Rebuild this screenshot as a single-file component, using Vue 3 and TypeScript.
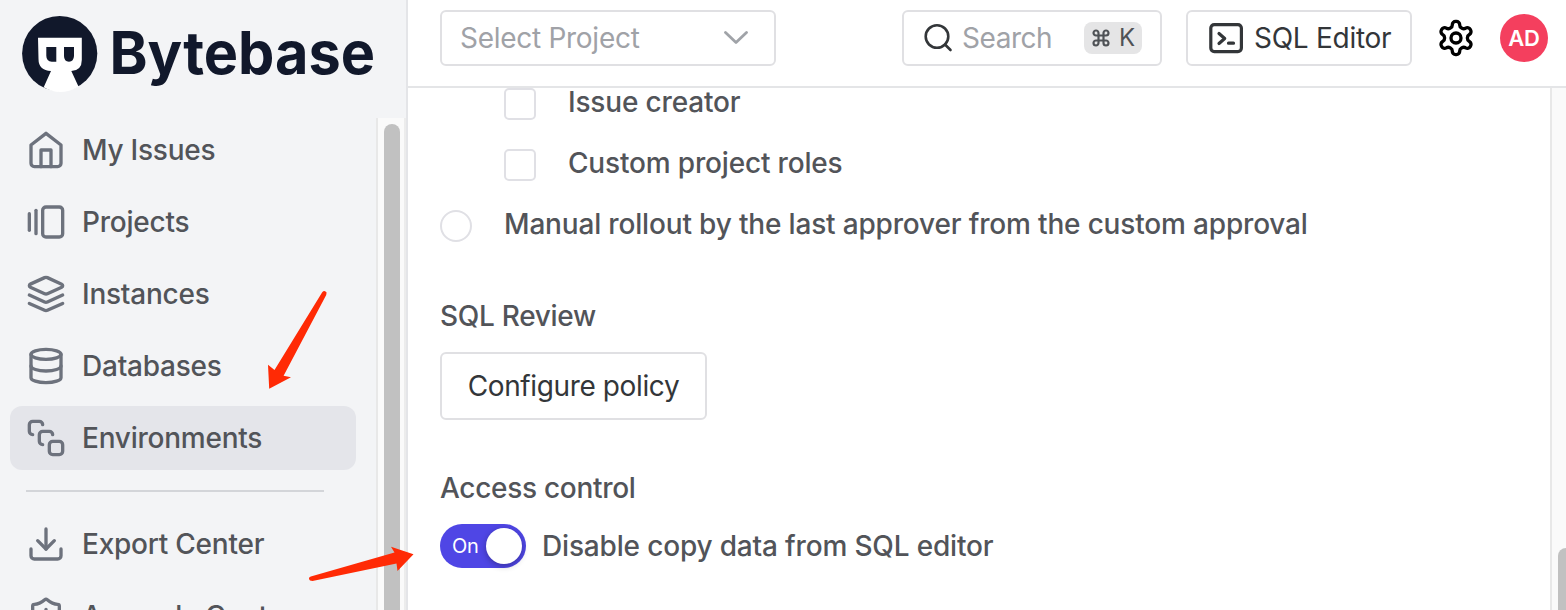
<script setup lang="ts">
interface NavItem {
  label: string
  paths: string[]
  active?: boolean
}

const primaryItems: NavItem[] = [
  { label: 'My Issues', paths: ['m3 9 9-7 9 7v11a2 2 0 0 1-2 2H5a2 2 0 0 1-2-2z', 'M9 22V12h6v10'] },
  { label: 'Projects', paths: ['M2 7v10', 'M6 5v14', 'M12 3h8a2 2 0 0 1 2 2v14a2 2 0 0 1-2 2h-8a2 2 0 0 1-2-2V5a2 2 0 0 1 2-2z'] },
  {
    label: 'Instances',
    paths: [
      'm12.83 2.18a2 2 0 0 0-1.66 0L2.6 6.08a1 1 0 0 0 0 1.83l8.58 3.91a2 2 0 0 0 1.66 0l8.58-3.9a1 1 0 0 0 0-1.83Z',
      'm22 17.65-9.17 4.16a2 2 0 0 1-1.66 0L2 17.65',
      'm22 12.65-9.17 4.16a2 2 0 0 1-1.66 0L2 12.65',
    ],
  },
  {
    label: 'Databases',
    paths: ['M3 5a9 3 0 1 0 18 0a9 3 0 1 0-18 0', 'M3 5v14a9 3 0 0 0 18 0V5', 'M3 12a9 3 0 0 0 18 0'],
  },
  {
    label: 'Environments',
    active: true,
    paths: [
      'M4 10c-1.1 0-2-.9-2-2V4c0-1.1.9-2 2-2h4c1.1 0 2 .9 2 2',
      'M10 16c-1.1 0-2-.9-2-2v-4c0-1.1.9-2 2-2h4c1.1 0 2 .9 2 2',
      'M16 14h4a2 2 0 0 1 2 2v4a2 2 0 0 1-2 2h-4a2 2 0 0 1-2-2v-4a2 2 0 0 1 2-2z',
    ],
  },
]

const secondaryItems: NavItem[] = [
  { label: 'Export Center', paths: ['M21 15v4a2 2 0 0 1-2 2H5a2 2 0 0 1-2-2v-4', 'm7 10 5 5 5-5', 'M12 15V3'] },
  {
    label: 'Anomaly Center',
    paths: [
      'M20 13c0 5-3.5 7.5-7.66 8.95a1 1 0 0 1-.67-.01C7.5 20.5 4 18 4 13V6a1 1 0 0 1 1-1c2 0 4.5-1.2 6.24-2.72a1.17 1.17 0 0 1 1.52 0C14.51 3.81 17 5 19 5a1 1 0 0 1 1 1z',
      'M12 8v4',
      'M12 16h.01',
    ],
  },
]

const roles: string[] = ['Issue creator', 'Custom project roles']
</script>

<template>
  <div class="app">
    <aside class="sidebar">
      <div class="logo">
        <svg width="400" height="118" viewBox="0 0 400 118">
          <circle cx="59.7" cy="53.6" r="37.6" fill="#11182b" />
          <path d="M38 37.8h43.8V60q0 10.5-10.5 11L78.6 86.7Q60 97 43.7 87.3L51 71Q38.5 70.5 38.5 59z" fill="#fff" />
          <path d="M46.3 47h10v14.8h-4.5q-5.5-.5-5.500-6zM64 47h10v9q-.3 5.500-5 5.800Q64 61.500 64 56z" fill="#11182b" />
          <text class="wordmark" x="109.5" y="73.500" textLength="265.500" lengthAdjust="spacingAndGlyphs">Bytebase</text>
        </svg>
      </div>
      <div class="side-body">
        <nav class="nav">
          <a v-for="item in primaryItems" :key="item.label" class="nav-item" :class="{ active: item.active }">
            <svg class="icon" viewBox="0 0 24 24"><path v-for="d in item.paths" :key="d" :d="d" /></svg>
            <span>{{ item.label }}</span>
          </a>
          <div class="divider"></div>
          <a v-for="item in secondaryItems" :key="item.label" class="nav-item">
            <svg class="icon" viewBox="0 0 24 24"><path v-for="d in item.paths" :key="d" :d="d" /></svg>
            <span>{{ item.label }}</span>
          </a>
        </nav>
        <div class="side-track"><div class="side-thumb"></div></div>
      </div>
    </aside>

    <main class="main">
      <header class="header">
        <div class="box select">
          <span>Select Project</span>
          <svg width="24" height="14" viewBox="0 0 24 14"><path d="M1.5 1.5 12 11.5 22.5 1.5" fill="none" stroke="#a0a3a8" stroke-width="2.8" stroke-linecap="round" stroke-linejoin="round" /></svg>
        </div>
        <div class="box search">
          <svg width="30" height="30" viewBox="0 0 30 30"><g fill="none" stroke="#333639" stroke-width="2.6" stroke-linecap="round"><circle cx="13" cy="13.5" r="11.3" /><path d="m21 21.5 5.500 5.500" /></g></svg>
          <span class="placeholder">Search</span>
          <span class="kbd">
            <svg width="20" height="20" viewBox="0 0 24 24"><path d="M15 6v12a3 3 0 1 0 3-3H6a3 3 0 1 0 3 3V6a3 3 0 1 0-3 3h12a3 3 0 1 0-3-3" fill="none" stroke="#4f5256" stroke-width="2.600" /></svg>
            <span>K</span>
          </span>
        </div>
        <div class="box sql">
          <svg width="36" height="32" viewBox="0 0 36 32"><g fill="none" stroke="#333639" stroke-width="3.2" stroke-linecap="round" stroke-linejoin="round"><rect x="2.8" y="2.6" width="30.6" height="27" rx="3.5" /><path d="m11 11.500 5.700 5-5.700 5M20.500 21.200h5" /></g></svg>
          <span>SQL Editor</span>
        </div>
        <svg class="gear" viewBox="0 0 24 24">
          <path d="M12.22 2h-.44a2 2 0 0 0-2 2v.18a2 2 0 0 1-1 1.73l-.43.25a2 2 0 0 1-2 0l-.15-.08a2 2 0 0 0-2.73.73l-.22.38a2 2 0 0 0 .73 2.73l.15.1a2 2 0 0 1 1 1.72v.51a2 2 0 0 1-1 1.74l-.15.09a2 2 0 0 0-.73 2.73l.22.38a2 2 0 0 0 2.73.73l.15-.08a2 2 0 0 1 2 0l.43.25a2 2 0 0 1 1 1.73V20a2 2 0 0 0 2 2h.44a2 2 0 0 0 2-2v-.18a2 2 0 0 1 1-1.73l.43-.25a2 2 0 0 1 2 0l.15.08a2 2 0 0 0 2.73-.73l.22-.39a2 2 0 0 0-.73-2.73l-.15-.08a2 2 0 0 1-1-1.74v-.5a2 2 0 0 1 1-1.74l.15-.09a2 2 0 0 0 .73-2.73l-.22-.38a2 2 0 0 0-2.73-.73l-.15.08a2 2 0 0 1-2 0l-.43-.25a2 2 0 0 1-1-1.73V4a2 2 0 0 0-2-2z" />
          <circle cx="12" cy="12" r="3" />
        </svg>
        <div class="avatar">AD</div>
      </header>

      <div class="body">
        <section class="content">
          <label v-for="role in roles" :key="role" class="row role"><i class="check"></i><span>{{ role }}</span></label>
          <label class="row"><i class="radio"></i><span>Manual rollout by the last approver from the custom approval</span></label>
          <h3 class="title review">SQL Review</h3>
          <button class="configure">Configure policy</button>
          <h3 class="title access">Access control</h3>
          <div class="toggle-row">
            <div class="switch"><span>On</span><i></i></div>
            <span>Disable copy data from SQL editor</span>
          </div>
        </section>
        <div class="main-track"><div class="main-thumb"></div></div>
      </div>
    </main>

    <svg class="arrows" width="1566" height="610" viewBox="0 0 1566 610">
      <path d="M322.2 292.2Q324.5 289.5 326.6 292.5L326.2 295 283.6 375.8 291 377.2 269.2 388.7 268 364.8 274.5 370z" />
      <path d="M310 580.5Q307.6 577.5 310.8 576.5L394.5 552.5 391 546.8 413.5 554.3 397.5 571 396.5 563.5 312.5 581z" />
    </svg>
  </div>
</template>

<style>
body {
  margin: 0;
  overflow: hidden;
}
</style>

<style scoped>
.app {
  position: relative;
  display: flex;
  width: 1566px;
  height: 610px;
  overflow: hidden;
  background: #fff;
  color: #525459;
  font: 500 28px/40px Inter, "Liberation Sans", sans-serif;
  letter-spacing: -0.17px;
  white-space: nowrap;
}
.sidebar {
  box-sizing: border-box;
  display: flex;
  flex: none;
  flex-direction: column;
  width: 408px;
  border-right: 2px solid #e4e5e8;
  background: #f3f4f6;
}
.logo {
  flex: none;
  height: 118px;
}
.logo svg {
  display: block;
}
.wordmark {
  fill: #11182b;
  font: 700 59px Inter, sans-serif;
  letter-spacing: 0;
}
.side-body {
  display: flex;
  flex: 1;
  min-height: 0;
}
.nav {
  display: flex;
  flex: 1;
  flex-direction: column;
  gap: 8px;
  padding: 0 20px 0 10px;
  letter-spacing: -0.24px;
}
.nav-item {
  box-sizing: border-box;
  display: flex;
  flex: none;
  align-items: center;
  gap: 16px;
  height: 64px;
  padding-left: 16px;
  border-radius: 12px;
}
.active {
  background: #e4e5ea;
}
.icon {
  width: 40px;
  height: 40px;
  fill: none;
  stroke: #6d727d;
  stroke-width: 2;
  stroke-linecap: round;
  stroke-linejoin: round;
}
.divider {
  flex: none;
  height: 2px;
  margin: 12px 32px 12px 16px;
  background: #d3d5d9;
}
.side-track {
  box-sizing: border-box;
  width: 30px;
  padding: 6px 4px 0 6px;
  border-left: 2px solid #e8e8e8;
  border-right: 2px solid #ececec;
  background: #fafafa;
}
.side-thumb {
  width: 16px;
  height: 520px;
  border-radius: 8px;
  background: #c1c1c1;
}
.main {
  display: flex;
  flex: 1;
  flex-direction: column;
  min-width: 0;
}
.header {
  box-sizing: border-box;
  display: flex;
  flex: none;
  height: 88px;
  padding: 10px 18px 0 32px;
  border-bottom: 2px solid #e4e5e7;
  font-weight: 400;
  letter-spacing: -0.28px;
}
.box {
  box-sizing: border-box;
  display: flex;
  align-items: center;
  height: 56px;
  border: 2px solid #e0e0e3;
  border-radius: 6px;
}
.select {
  justify-content: space-between;
  width: 336px;
  padding: 0 26px 0 18px;
  color: #a0a2a7;
}
.search {
  width: 260px;
  margin-left: 126px;
  padding-left: 20px;
}
.placeholder {
  margin-left: 8px;
  color: #a0a2a7;
  letter-spacing: -0.45px;
}
.kbd {
  display: flex;
  align-items: center;
  justify-content: center;
  gap: 8px;
  width: 58px;
  height: 32px;
  margin-left: auto;
  margin-right: 18px;
  border-radius: 8px;
  background: #e5e5e6;
  color: #4f5256;
  font-size: 24px;
}
.sql {
  width: 226px;
  margin-left: 24px;
  padding-left: 20px;
  gap: 10px;
  color: #333639;
}
.gear {
  width: 40px;
  height: 40px;
  margin: 8px 0 0 24px;
  fill: none;
  stroke: #000;
  stroke-width: 2;
  stroke-linecap: round;
  stroke-linejoin: round;
}
.avatar {
  width: 48px;
  height: 48px;
  margin: 4px 0 0 24px;
  border-radius: 50%;
  background: #f43f5e;
  color: #fff;
  font-size: 22px;
  font-weight: 600;
  line-height: 49px;
  text-align: center;
}
.body {
  display: flex;
  flex: 1;
  min-height: 0;
}
.content {
  flex: 1;
  padding-left: 32px;
}
.row {
  display: flex;
  gap: 32px;
  height: 61px;
}
.row span {
  margin-top: -6px;
}
.role {
  padding-left: 64px;
}
.check,
.radio {
  box-sizing: border-box;
  flex: none;
  width: 32px;
  height: 32px;
  border: 2px solid #e0e0e5;
  border-radius: 5px;
}
.radio {
  border-radius: 50%;
}
.title {
  margin: 0;
  font: inherit;
  letter-spacing: -0.3px;
}
.review {
  margin-top: 25px;
}
.configure {
  box-sizing: border-box;
  display: block;
  width: 267px;
  height: 68px;
  margin: 16px 0 48px;
  padding: 0;
  border: 2px solid #e0e0e3;
  border-radius: 6px;
  background: #fff;
  color: #333639;
  font: 400 28px/40px Inter, "Liberation Sans", sans-serif;
  letter-spacing: -0.38px;
}
.toggle-row {
  display: flex;
  align-items: center;
  gap: 16px;
  margin-top: 16px;
}
.switch {
  box-sizing: border-box;
  display: flex;
  align-items: center;
  justify-content: space-between;
  width: 86px;
  height: 44px;
  padding: 0 4px 0 12px;
  border-radius: 22px;
  background: #4f46e5;
  color: #fff;
  font-size: 20px;
  font-weight: 400;
}
.switch i {
  width: 36px;
  height: 36px;
  border-radius: 50%;
  background: #fff;
  box-shadow: 0 2px 6px rgba(0, 0, 0, 0.3);
}
.main-track {
  box-sizing: border-box;
  width: 16px;
  padding: 460px 0 0 6px;
  border-left: 2px solid #e8e8e8;
  background: #fafafa;
}
.main-thumb {
  width: 16px;
  height: 200px;
  border-radius: 8px;
  background: #c1c1c1;
}
.arrows {
  position: absolute;
  inset: 0;
  fill: #ff2a05;
  pointer-events: none;
}
</style>
